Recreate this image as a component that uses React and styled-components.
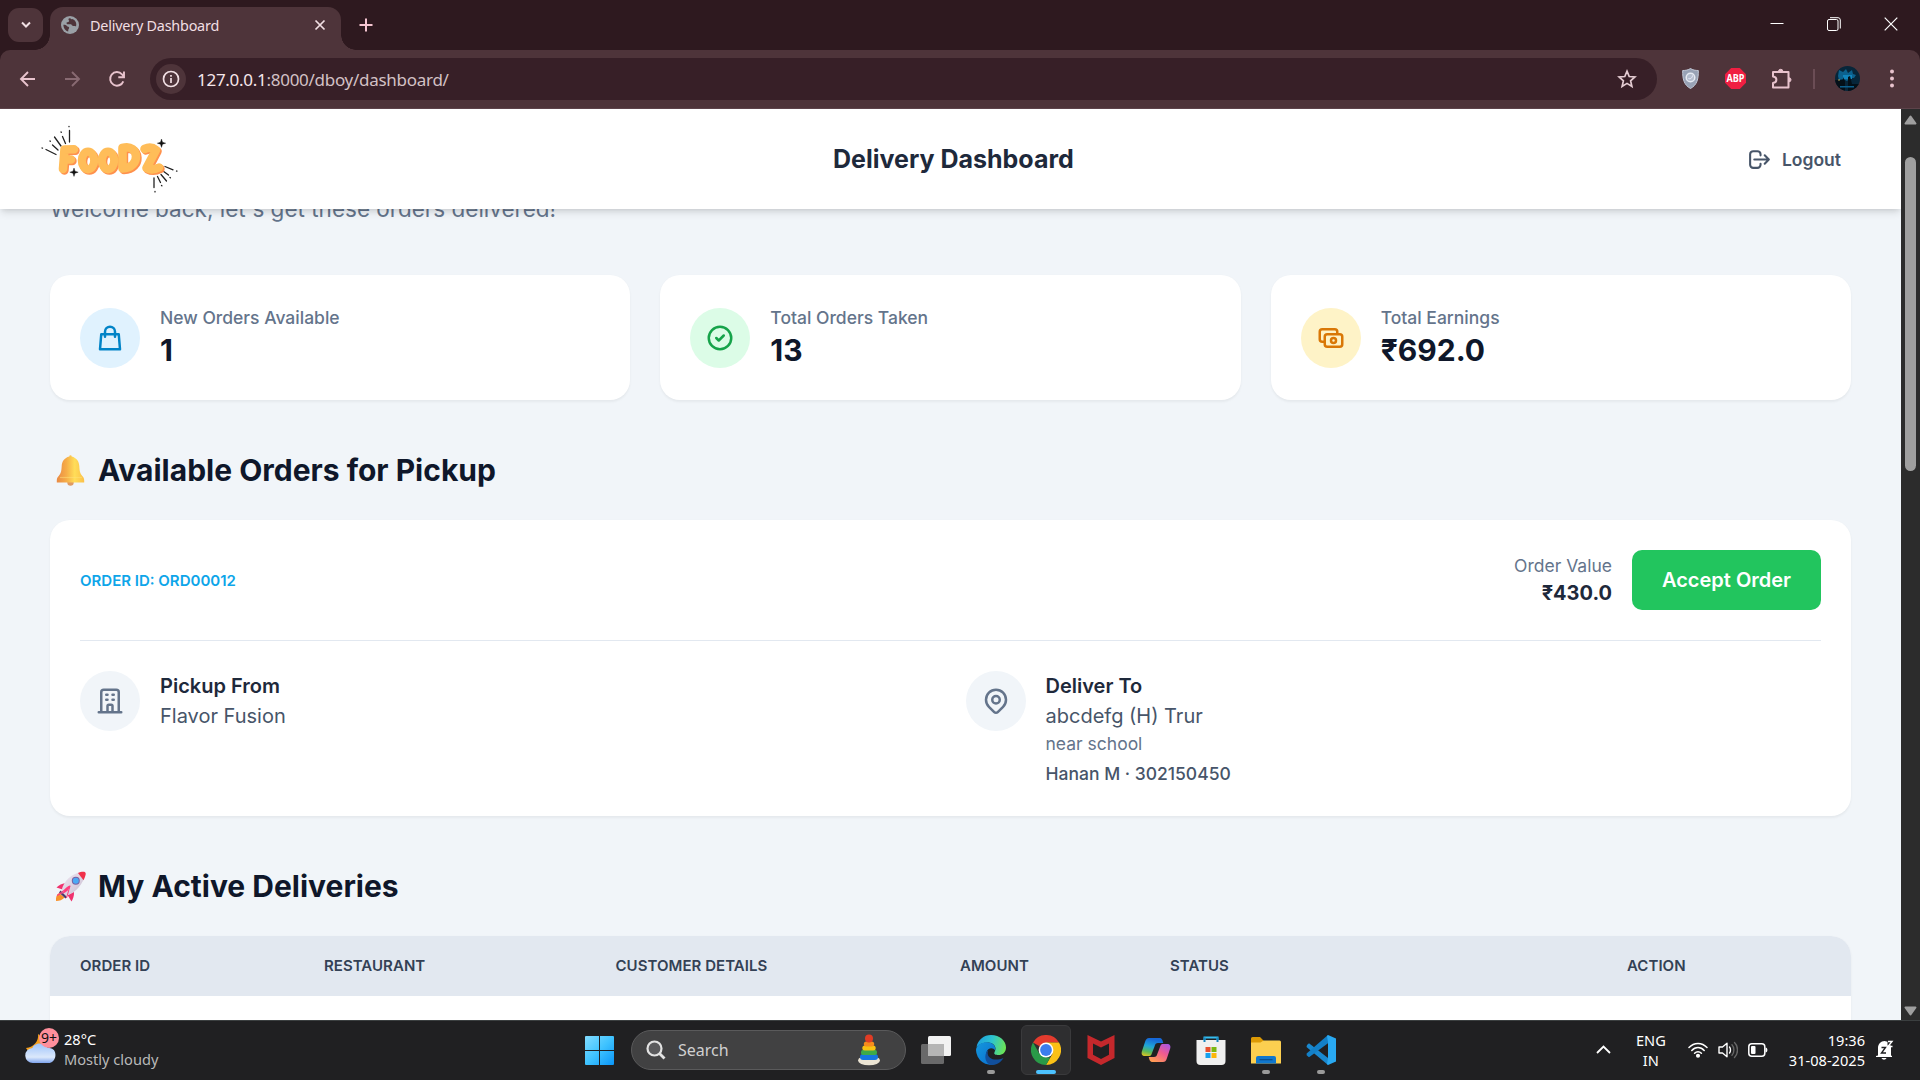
import React from "react";
import styled, { createGlobalStyle } from "styled-components";

const Global = createGlobalStyle`
  * { box-sizing: border-box; }
  html, body { margin: 0; padding: 0; overflow: hidden; }
  button { font: inherit; border: 0; }
  svg { display: block; flex: none; }
`;

const SYS = `"Noto Sans", "Open Sans", sans-serif`;
const UI = `Inter, "Liberation Sans", sans-serif`;

const Screen = styled.div`
  width: 1920px;
  height: 1080px;
  display: flex;
  flex-direction: column;
  overflow: hidden;
  background: #2e191f;
  font-family: ${SYS};
`;

/* ---------- browser frame ---------- */
const TabStrip = styled.div`
  height: 50px;
  flex: none;
  display: flex;
  align-items: flex-start;
  padding: 8px 0 0 8px;
  background: #2e191f;
`;
const TabSearch = styled.button`
  width: 35px;
  height: 34px;
  border-radius: 11px;
  background: #4e343a;
  display: grid;
  place-items: center;
  padding: 0;
`;
const Tab = styled.div`
  position: relative;
  width: 291px;
  height: 43px;
  margin: -1px 0 0 7px;
  padding: 0 15px 7px 11px;
  border-radius: 13px 13px 0 0;
  background: #4e343a;
  display: flex;
  align-items: center;
  &::before, &::after {
    content: "";
    position: absolute;
    bottom: 0;
    width: 15px;
    height: 15px;
  }
  &::before { left: -15px; background: radial-gradient(circle at 0 0, transparent 14.5px, #4e343a 15px); }
  &::after { right: -15px; background: radial-gradient(circle at 100% 0, transparent 14.5px, #4e343a 15px); }
`;
const TabTitle = styled.span`
  flex: 1;
  margin-left: 11px;
  padding-top: 1px;
  font-size: 14.4px;
  line-height: 20px;
  letter-spacing: -0.22px;
  color: #f1dfe3;
`;
const NewTab = styled.span`
  margin: 10px 0 0 18px;
`;
const WindowButtons = styled.div`
  margin-left: auto;
  display: flex;
  gap: 43px;
  padding: 9px 22px 0 0;
`;
const Toolbar = styled.div`
  height: 59px;
  flex: none;
  display: flex;
  align-items: center;
  padding: 0 20px 1px 17px;
  background: #4e343a;
  border-bottom: 1px solid #5d434a;
  border-radius: 10px 10px 0 0;
`;
const NavIcons = styled.div`
  display: flex;
  gap: 25px;
  width: 133px;
`;
const Omnibox = styled.div`
  width: 1507px;
  height: 42px;
  border-radius: 21px;
  background: #371f27;
  display: flex;
  align-items: center;
  padding: 0 20px 0 6px;
`;
const InfoBadge = styled.span`
  width: 30px;
  height: 30px;
  border-radius: 50%;
  background: #4e343a;
  display: grid;
  place-items: center;
`;
const Url = styled.span`
  flex: 1;
  margin-left: 11px;
  padding-top: 2px;
  font-size: 17px;
  letter-spacing: -0.28px;
  color: #d3c1c5;
  b { font-weight: 400; color: #f6e6ea; }
`;
const Extensions = styled.div`
  flex: 1;
  display: flex;
  align-items: center;
  margin-left: 25px;
`;
const Slot = styled.span`
  margin-left: ${(p) => p.$gap}px;
`;
const Divider = styled.span`
  width: 2px;
  height: 20px;
  margin-left: 20px;
  background: #6b4d55;
`;

/* ---------- web page ---------- */
const Viewport = styled.div`
  height: 911px;
  flex: none;
  display: flex;
  background: #f1f5f9;
`;
const Page = styled.div`
  width: 1901px;
  height: 911px;
  overflow: hidden;
  display: flex;
  flex-direction: column;
  font-family: ${UI};
  background: #f1f5f9;
`;
const Header = styled.header`
  position: relative;
  z-index: 2;
  height: 100px;
  flex: none;
  display: grid;
  grid-template-columns: 793px 321px 1fr;
  align-items: center;
  padding: 0 60px 0 40px;
  background: #fff;
  box-shadow: 0 5px 7.5px -1px rgba(0, 0, 0, 0.1), 0 2.5px 5px -2px rgba(0, 0, 0, 0.1);
`;
const HeaderTitle = styled.h1`
  margin: 1px 0 0;
  font-size: 25px;
  font-weight: 700;
  line-height: 35px;
  color: #1e293b;
  white-space: nowrap;
`;
const Logout = styled.a`
  justify-self: end;
  display: flex;
  align-items: center;
  gap: 10px;
  font-size: 17.5px;
  font-weight: 600;
  color: #475569;
`;
const Main = styled.main`
  padding: 0 50px;
  margin-top: -18px;
`;
const Welcome = styled.p`
  margin: 0 0 49px;
  font-size: 22.5px;
  line-height: 35px;
  color: #64748b;
`;
const Stats = styled.section`
  display: grid;
  grid-template-columns: repeat(3, 1fr);
  gap: 30px;
  margin-bottom: 50px;
`;
const Card = styled.div`
  background: #fff;
  border-radius: 20px;
  padding: 30px;
  box-shadow: 0 1.25px 2.5px rgba(0, 0, 0, 0.05);
`;
const StatCard = styled(Card)`
  display: flex;
  align-items: center;
  gap: 20px;
`;
const Circle = styled.span`
  width: 60px;
  height: 60px;
  flex: none;
  border-radius: 50%;
  display: grid;
  place-items: center;
  background: ${(p) => p.$bg};
  color: ${(p) => p.$fg};
`;
const Text = styled.div`
  font-size: ${(p) => p.$size || 20}px;
  line-height: ${(p) => p.$line || 30}px;
  font-weight: ${(p) => p.$weight || 400};
  color: ${(p) => p.$color};
  margin-top: ${(p) => p.$top || 0}px;
`;
const SectionTitle = styled.h2`
  margin: 0 0 30px;
  display: flex;
  align-items: center;
  font-size: 30px;
  line-height: 40px;
  font-weight: 700;
  color: #0f172a;
  svg { margin-right: 8px; }
`;
const OrderCard = styled(Card)`
  margin-bottom: 50px;
`;
const OrderHead = styled.div`
  display: flex;
  align-items: center;
  gap: 20px;
  padding-bottom: 30px;
  border-bottom: 1px solid #e2e8f0;
  margin-bottom: 30px;
`;
const OrderId = styled.span`
  margin-right: auto;
  font-size: 15px;
  font-weight: 600;
  color: #0ea5e9;
`;
const OrderValue = styled.div`
  text-align: right;
`;
const Accept = styled.button`
  height: 60px;
  width: 189px;
  padding: 0;
  border-radius: 10px;
  background: #22c55e;
  color: #fff;
  font-size: 20px;
  font-weight: 600;
`;
const Stops = styled.div`
  display: grid;
  grid-template-columns: 1fr 1fr;
  gap: 30px;
`;
const Stop = styled.div`
  display: flex;
  gap: 20px;
`;
const Table = styled.div`
  background: #fff;
  height: 300px;
  border-radius: 20px 20px 0 0;
  overflow: hidden;
  box-shadow: 0 1.25px 2.5px rgba(0, 0, 0, 0.05);
`;
const TableHead = styled.div`
  display: grid;
  grid-template-columns: 244px 291.5px 344.5px 210px 457px 1fr;
  padding: 20px 0 20px 30px;
  background: #e2e8f0;
  font-size: 15px;
  line-height: 20px;
  font-weight: 600;
  letter-spacing: 0.04px;
  color: #334155;
`;
const Scrollbar = styled.div`
  width: 19px;
  display: flex;
  flex-direction: column;
  align-items: center;
  background: #2c2c2c;
  padding: 6px 0 4px;
`;
const Thumb = styled.div`
  width: 11px;
  height: 314px;
  margin: 32px 0 auto;
  border-radius: 6px;
  background: #9f9f9f;
`;

/* ---------- desktop taskbar ---------- */
const Taskbar = styled.footer`
  height: 60px;
  flex: none;
  display: grid;
  grid-template-columns: 585px 1fr auto;
  background: #202022;
  border-top: 1px solid #3b3f40;
  color: #fff;
`;
const Weather = styled.div`
  display: flex;
  gap: 3px;
  padding: 6px 0 0 25px;
`;
const WeatherText = styled.div`
  padding-top: 2px;
`;
const SysLine = styled.div`
  font-size: 14.6px;
  line-height: 20px;
  color: ${(p) => p.$color || "#fff"};
  text-align: ${(p) => p.$align || "left"};
  white-space: nowrap;
`;
const Apps = styled.div`
  display: flex;
  align-items: center;
  padding-bottom: 1px;
`;
const SearchBox = styled.div`
  width: 275px;
  height: 40px;
  margin: 0 5px 0 17px;
  padding: 0 25px 0 14px;
  border-radius: 20px;
  border: 1px solid #5a5a5b;
  background: #414142;
  display: flex;
  align-items: center;
  gap: 12px;
  font-size: 16px;
  color: #d0d0d0;
  svg:last-child { margin-left: auto; }
`;
const TaskApp = styled.div`
  width: 50px;
  height: 50px;
  margin-right: 5px;
  border-radius: 6px;
  display: flex;
  flex-direction: column;
  align-items: center;
  padding-top: 9px;
  border: 1px solid ${(p) => (p.$active ? "#3a3a3c" : "transparent")};
  background: ${(p) => (p.$active ? "#2e2e30" : "transparent")};
  &::after {
    content: "";
    width: ${(p) => (p.$active ? 20 : 8)}px;
    height: 4px;
    margin-top: 5px;
    border-radius: 2px;
    background: ${(p) => (p.$active ? "#4cc2ff" : p.$open ? "#9a9a9a" : "transparent")};
  }
`;
const Tray = styled.div`
  display: flex;
  align-items: center;
  padding: 0 26px 2px 0;
`;
const TrayItem = styled.div`
  margin-left: ${(p) => p.$gap}px;
`;

/* ---------- drawings ---------- */
const Stroke = ({ size = 30, d, w = 2 }) => (
  <svg width={size} height={size} viewBox="0 0 24 24" fill="none" stroke="currentColor" strokeWidth={w} strokeLinecap="round" strokeLinejoin="round">
    {[].concat(d).map((x) => <path key={x} d={x} />)}
  </svg>
);
const D = {
  bag: "M16 11V7a4 4 0 00-8 0v4M5 9h14l1 12H4L5 9z",
  check: "M9 12l2 2 4-4m6 2a9 9 0 11-18 0 9 9 0 0118 0z",
  cash: "M17 9V7a2 2 0 00-2-2H5a2 2 0 00-2 2v6a2 2 0 002 2h2m2 4h10a2 2 0 002-2v-6a2 2 0 00-2-2H9a2 2 0 00-2 2v6a2 2 0 002 2zm7-5a2 2 0 11-4 0 2 2 0 014 0z",
  building: "M19 21V5a2 2 0 00-2-2H7a2 2 0 00-2 2v16m14 0h2m-2 0h-5m-9 0H3m2 0h5M9 7h1m-1 4h1m4-4h1m-1 4h1m-5 10v-5a1 1 0 011-1h2a1 1 0 011 1v5m-4 0h4",
  pin: ["M17.657 16.657L13.414 20.9a1.998 1.998 0 01-2.827 0l-4.244-4.243a8 8 0 1111.314 0z", "M15 11a3 3 0 11-6 0 3 3 0 016 0z"],
  logout: "M17 16l4-4m0 0l-4-4m4 4H7m6 4v1a3 3 0 01-3 3H6a3 3 0 01-3-3V7a3 3 0 013-3h4a3 3 0 013 3v1",
};

const Line = ({ w, h, d, color = "#e8c3cd", sw = 2 }) => (
  <svg width={w} height={h} viewBox={`0 0 ${w} ${h}`} fill="none" stroke={color} strokeWidth={sw}>
    <path d={d} />
  </svg>
);

const Globe = () => (
  <svg width="18" height="18" viewBox="0 0 18 18">
    <circle cx="9" cy="9" r="9" fill="#9aa0a6" />
    <path d="M8 2.2c-1 1-.4 2 .2 2.6-.1 1.300-1.500 1.500-2.600 1.600-.4 1.100.3 1.800 1.600 1.900h3c.7.9 1 1.700 2.300 1.700.9-.1 1.300.2 2.600.2a6.600 6.600 0 0 0-3.500-7.300c-.7.7-1.600.6-1.900-.3zM2.400 8.800c1.600.1 2.900.3 3.800 1.500.8.7 1.900.4 2 1.500-.2 1.100-1 1.400-.9 2.400-.1.7-.2.900 0 1.300-2.800-.6-4.900-3.300-4.900-6.700z" fill="#4e343a" />
  </svg>
);

const Logo = () => (
  <svg width="140" height="72" viewBox="0 -2.500 140 72">
    <g stroke="#222" strokeWidth="1.300" strokeLinecap="round" fill="none">
      <path d="M6 24l10 5M12.500 19.500l5.500 5M14.500 11.500l6.500 9M22.500 11l3 7M29.500 5v11.500M125 41l8 3.300M123 45.500l5.500 4M121 49l5.500 6.500M117.500 51l3 6M114 52.500v9.500" />
      <path d="M2 22.500l.5.200M10 15.500l.3.300M21 6.500l.3.300M29 .800v.4M136.500 45.500l.4.200M130 52l.4.300M121.500 60l.4.300M115 66v.4" />
    </g>
    {[["#ff914d", 1.400, 1.400], ["#ffbd59", 0, 0]].map(([c, x, y]) => (
      <g key={c} transform={`translate(${x} ${y})`} stroke={c} fill="none" strokeWidth="8.200" strokeLinecap="round" strokeLinejoin="round">
        <path d="M23 43.500L24.500 24L34 23.800M24.500 34h6.500" strokeWidth="8.600" />
        <ellipse cx="48" cy="35" rx="6.200" ry="8.800" />
        <ellipse cx="68" cy="35" rx="6.200" ry="8.800" />
        <path d="M82.500 43V22.500C99.500 17.500 101.500 42.500 82.500 43z" strokeWidth="8.600" />
        <path d="M104.500 23.500Q111 20.500 116 24.500L106.500 42.500Q112 45.500 119 42" strokeWidth="8.600" />
      </g>
    ))}
    <path d="M121.500 13.500l1 3.200 3.200 1-3.200 1-1 3.200-1-3.200-3.200-1 3.200-1zM34 42.500l1 3.200 3.200 1-3.200 1-1 3.200-1-3.200-3.200-1 3.200-1z" fill="#111" stroke="#111" strokeWidth=".4" />
  </svg>
);

const Bell = () => (
  <svg width="40" height="40" viewBox="0 0 40 40">
    <defs>
      <linearGradient id="bell" x1="0" x2="1"><stop offset="0" stopColor="#e98a45" /><stop offset=".35" stopColor="#f6ad48" /><stop offset=".65" stopColor="#ffdd58" /><stop offset="1" stopColor="#fbc04a" /></linearGradient>
    </defs>
    <circle cx="20.500" cy="32.500" r="3.200" fill="#e09a62" />
    <path d="M19.300 6.500a1.200 1.200 0 0 1 2.400 0c5 1.300 7.300 5 7.600 9.500.3 6 1 7.500 3 10 1.300 1.500 1.900 2.500 1.900 4.500v2h-27.400v-2c0-2 .6-3 1.900-4.500 2-2.500 2.700-4 3-10 .3-4.500 2.600-8.200 7.600-9.500z" fill="url(#bell)" />
    <path d="M10 27.500h22" stroke="#ffe27a" strokeWidth="1.200" opacity=".5" />
  </svg>
);
const Rocket = () => (
  <svg width="40" height="40" viewBox="0 0 40 40">
    <defs>
      <linearGradient id="hull" x1="0" y1="0" x2="1" y2="1"><stop offset="0" stopColor="#efe6f1" /><stop offset=".6" stopColor="#d9cfdf" /><stop offset="1" stopColor="#b8a5bd" /></linearGradient>
    </defs>
    <path d="M9 27c-2.500 1.500-3.300 4.500-3 8 3.500 0 6.500-1 8.500-3.500z" fill="#f8922c" />
    <path d="M17 17c-5 .3-8.500 2.300-10.500 4.500l6 2zM24 26c.3 4-1 7-2.500 9.500l-4-6.500z" fill="#f0326e" />
    <path d="M11.500 24.500C14 15 21 7.500 32 6c2-.3 3.700.2 3.500 2C33 18 26 26.500 16 30z" fill="url(#hull)" />
    <path d="M28 7c3-1.200 8-2.300 7.700 1-.4 2.500-1.200 4.300-2.200 6.300z" fill="#f0304a" />
    <path d="M10.500 24.500l6.500 6.500-1.500 1.500-6.500-6z" fill="#4a3b6b" />
    <path d="M20 20L7 29.500l5-2.500M20 20l-3.500 12" stroke="#ff3d7d" strokeWidth="1" fill="none" />
    <path d="M20.500 19.500c-3 .5-6.500 3.500-8.500 8.500 4.500-1.500 7.500-4.500 8.500-8.500z" fill="#ff3d7d" />
    <circle cx="25.800" cy="14.800" r="4" fill="#7a5fa0" /><circle cx="25.800" cy="14.800" r="3" fill="#4ba9f5" />
  </svg>
);

const WeatherIcon = () => (
  <svg width="36" height="38" viewBox="0 0 36 38">
    <defs><linearGradient id="cloud" x1="0" y1="0" x2="0" y2="1"><stop offset="0" stopColor="#9fc4fb" /><stop offset=".7" stopColor="#dbe8fb" /><stop offset="1" stopColor="#7ea4ee" /></linearGradient></defs>
    <path d="M13 7c1 7-4 13-12 14 2 4 8 6 13 4s8-12-1-18z" fill="#f7a01d" />
    <path d="M8 36a7.500 7.500 0 0 1-.5-15C9 15.500 20 14.500 23 21c10-1.500 10 15 0 15z" fill="url(#cloud)" />
    <circle cx="24" cy="11" r="10" fill="#ff8f9c" />
    <text x="24" y="16" textAnchor="middle" fontFamily="Noto Sans, sans-serif" fontSize="14" fill="#111">9+</text>
  </svg>
);
const Windows = () => (
  <svg width="29" height="29" viewBox="0 0 29 29">
    <defs><linearGradient id="win" x1="0" y1="0" x2="1" y2="1"><stop offset="0" stopColor="#83dcff" /><stop offset=".5" stopColor="#3fc3ff" /><stop offset="1" stopColor="#0a95f8" /></linearGradient></defs>
    <path d="M0 1a1 1 0 0 1 1-1h13v14H0zM15 0h13a1 1 0 0 1 1 1v13H15zM0 15h14v14H1a1 1 0 0 1-1-1zM15 15h14v13a1 1 0 0 1-1 1H15z" fill="url(#win)" />
  </svg>
);
const Toy = () => (
  <svg width="22" height="32" viewBox="0 0 22 32">
    <ellipse cx="11" cy="26.500" rx="11" ry="4.800" fill="#ece5d4" />
    <rect x="2" y="20" width="18" height="6" rx="3" fill="#1677e0" />
    <rect x="3" y="15.700" width="16" height="5.300" rx="2.600" fill="#3dab49" />
    <rect x="4.300" y="11.600" width="13.400" height="5" rx="2.500" fill="#f7c212" />
    <rect x="5.800" y="7.500" width="10.400" height="5" rx="2.500" fill="#f78c1c" />
    <circle cx="11" cy="4.500" r="4" fill="#e03c25" />
  </svg>
);
const TaskView = () => (
  <svg width="30" height="30" viewBox="0 0 30 30">
    <rect x="7" y="1" width="23" height="20" rx="1.500" fill="#f2f2f2" />
    <rect x="0" y="9" width="23" height="20" rx="1.500" fill="#777" opacity=".85" />
    <path d="M7 9h16v12H7z" fill="#b5b5b5" />
  </svg>
);
const Edge = () => (
  <svg width="30" height="30" viewBox="0 0 30 30">
    <defs>
      <linearGradient id="e1" x1="0" y1=".3" x2="1" y2=".5"><stop offset="0" stopColor="#1c9fe0" /><stop offset=".5" stopColor="#2dc4cf" /><stop offset="1" stopColor="#6be455" /></linearGradient>
      <linearGradient id="e2" x1="0" y1="0" x2="1" y2="1"><stop offset="0" stopColor="#1497dc" /><stop offset="1" stopColor="#0a6ed0" /></linearGradient>
    </defs>
    <path d="M.5 12C2 4.500 8 0 15 0c9 0 15 6 15 12.500 0 5-3.500 7.500-7.500 7.500-3 0-5-1-4-2.800 3-5-1-9.700-6.500-9.700C7 7.500 3 9 .5 12z" fill="url(#e1)" />
    <path d="M0 15C.5 9.500 6 7.300 11 7.300c5.500 0 9.500 4 8 8-1.500-3.300-7.500-3-8.500 2-.8 5 3 10.500 9 11.700A15 15 0 0 1 0 15z" fill="url(#e2)" />
    <path d="M12.500 14.500c-3.500 7 4 13 15 8.500-3 5-8 7.500-13 6.900C8 27.500 8 18 12.500 14.500z" fill="#114f9c" />
  </svg>
);
const ChromeIcon = () => (
  <svg width="30" height="30" viewBox="0 0 30 30">
    <path d="M15 15L2 7.500A15 15 0 0 1 28 7.500H15z" fill="#e33b2e" />
    <path d="M15 7.500h13A15 15 0 0 1 15 30l6.500-11.200z" fill="#fbc116" />
    <path d="M2 7.500l6.500 11.300L15 22.500h4.300L15 30A15 15 0 0 1 2 7.500z" fill="#2a9a48" />
    <circle cx="15" cy="15" r="7.400" fill="#fff" /><circle cx="15" cy="15" r="5.900" fill="#3b7ded" />
  </svg>
);
const McAfee = () => (
  <svg width="28" height="30" viewBox="0 0 28 30">
    <path d="M.5 0L14 6.500 27.500 0v23L14 30 .5 23z" fill="#c5282c" />
    <path d="M6 8.500l8 4 8-4v11.300l-8 4.200-8-4.200z" fill="#202022" />
  </svg>
);
const Copilot = () => (
  <svg width="30" height="30" viewBox="0 0 30 30">
    <defs>
      <linearGradient id="c1" x1=".3" y1="0" x2="0" y2="1"><stop offset="0" stopColor="#1668d8" /><stop offset=".4" stopColor="#1fa5d8" /><stop offset=".7" stopColor="#59b85a" /><stop offset="1" stopColor="#f5c518" /></linearGradient>
      <linearGradient id="c2" x1="1" y1="0" x2=".3" y2="1"><stop offset="0" stopColor="#a055f0" /><stop offset=".5" stopColor="#ef5a90" /><stop offset="1" stopColor="#ff9a55" /></linearGradient>
    </defs>
    <path d="M8 3h10c3 0 3.500 2 4.300 5H17c-2 0-2.800 1-3.300 3L11 18c-.7 2.500-1.500 3-3.500 3H4c-3 0-4-2-3-5l3-9c1-3 2-4 4-4z" fill="url(#c1)" />
    <path d="M22 27H12c-3 0-3.500-2-4.300-5H13c2 0 2.800-1 3.300-3L19 12c.7-2.500 1.500-3 3.500-3H26c3 0 4 2 3 5l-3 9c-1 3-2 4-4 4z" fill="url(#c2)" />
  </svg>
);
const Store = () => (
  <svg width="30" height="30" viewBox="0 0 30 30">
    <path d="M8.500 7V2.500h13V7" fill="none" stroke="#35bdf0" strokeWidth="2" />
    <path d="M.5 5h29v21a4 4 0 0 1-4 4h-21a4 4 0 0 1-4-4z" fill="#f0f0f0" />
    <path d="M8.500 2.500V7M21.500 2.500V7" stroke="#1583bd" strokeWidth="2" />
    <path d="M9.500 12h5v5h-5z" fill="#e8502f" /><path d="M15.500 12h5v5h-5z" fill="#7cb811" /><path d="M9.500 18h5v5h-5z" fill="#16a2ee" /><path d="M15.500 18h5v5h-5z" fill="#fdb70b" />
  </svg>
);
const Folder = () => (
  <svg width="30" height="30" viewBox="0 0 30 30">
    <path d="M0 3.500A1.500 1.500 0 0 1 1.500 2H9l3.500 3.500V9H0z" fill="#dc9a05" />
    <path d="M0 7.500h9.500L12.500 5.500h16A1.500 1.500 0 0 1 30 7v21.500H0z" fill="#fccf50" />
    <path d="M5 28.500V23a2 2 0 0 1 2-2h16a2 2 0 0 1 2 2v5.500z" fill="#1077cd" /><path d="M8.500 24.700h13" stroke="#0a4d8c" strokeWidth="1.200" />
  </svg>
);
const VsCode = () => (
  <svg width="30" height="30" viewBox="0 0 30 30">
    <path d="M1 10l2-1.800 20 15.600L22 30 .5 12z" fill="#1a88cf" />
    <path d="M.6 18.500L22 0l1 7.500L3 22.300.6 20.300z" fill="#1380c8" />
    <path d="M22 0l8 3.500v23L22 30l-1-1 1-6V7l-1-6z" fill="#29a9f2" />
  </svg>
);
const Shield = () => (
  <svg width="17" height="21" viewBox="0 0 17 21">
    <path d="M8.500.5c2 1.500 5 2 7.800 2C16.500 11 15 17 8.500 20.500 2 17 .5 11 .7 2.500c2.800 0 5.800-.5 7.800-2z" fill="#98a2b5" stroke="#c3cad8" />
    <circle cx="8.500" cy="9.500" r="4.300" fill="#b4bdcd" stroke="#e6eaf2" strokeWidth="1.500" /><path d="M6.500 10.500c2 1 4-1 4-3" stroke="#eef" fill="none" />
  </svg>
);
const Abp = () => (
  <svg width="21" height="21" viewBox="0 0 21 21">
    <path d="M6.200 0h8.600L21 6.200v8.600L14.800 21H6.200L0 14.800V6.200z" fill="#f01f42" />
    <text x="10.500" y="14" textAnchor="middle" fontFamily="Open Sans, sans-serif" fontWeight="700" fontSize="9.800" textLength="18" lengthAdjust="spacingAndGlyphs" fill="#fff">ABP</text>
  </svg>
);
const Avatar = () => (
  <svg width="25" height="25" viewBox="0 0 25 25">
    <defs><clipPath id="av"><circle cx="12.500" cy="12.500" r="12.500" /></clipPath></defs>
    <g clipPath="url(#av)">
      <path d="M0 0h25v25H0z" fill="#07263a" />
      <path d="M4 4l4 2 3-3 2 4 4-3 1 4 3 1-2 3h-4l-3 3-4-2-4 1-1-4z" fill="#0c618e" />
      <path d="M8 9h9v4H8z" fill="#1185bd" /><path d="M0 14h8v-3l2 4v10H0zM13 11l2-1 2 8h8v7H13z" fill="#041018" />
      <path d="M5 20h14v1.500H5z" fill="#0c5f8c" /><circle cx="4" cy="14" r=".8" fill="#c9b35a" />
    </g>
  </svg>
);
const Wifi = () => (
  <svg width="20" height="16" viewBox="0 0 20 16" fill="none" stroke="#fff" strokeWidth="1.500" strokeLinecap="round">
    <path d="M1 5.500c5-5.500 13-5.500 18 0M3.800 8.500c3.500-4 8.900-4 12.400 0M6.600 11.300c2-2.200 4.800-2.200 6.800 0" /><circle cx="10" cy="13.700" r="1.300" fill="#fff" />
  </svg>
);
const Volume = () => (
  <svg width="20" height="18" viewBox="0 0 20 18" fill="none" strokeWidth="1.400" strokeLinecap="round" strokeLinejoin="round">
    <path d="M1 6h3.500L9 2.200v13.600L4.500 12H1z" stroke="#fff" /><path d="M11.500 6c1.300 1.500 1.300 4.500 0 6" stroke="#fff" /><path d="M14 3.800c2.500 2.500 2.500 7.900 0 10.400M16.500 1.500c4 4 4 11 0 15" stroke="#666" />
  </svg>
);
const Battery = () => (
  <svg width="20" height="14" viewBox="0 0 20 14"><rect x=".8" y=".8" width="16" height="12.400" rx="3" fill="none" stroke="#fff" strokeWidth="1.500" /><rect x="3" y="3" width="4.500" height="8" rx="1" fill="#fff" /><path d="M17.500 4.500c2.500 0 2.500 5 0 5z" fill="#fff" /></svg>
);
const Dnd = () => (
  <svg width="18" height="20" viewBox="0 0 18 20">
    <path d="M2 15.500V8c0-4 3-7 6.500-7l3 .8v3.700h3.500v10l1 .5v1H0v-1z" fill="#fff" /><path d="M5.500 18h5c-1 2.300-4 2.300-5 0z" fill="#fff" />
    <path d="M5.500 7.500h4l-4 5.500h4.500" stroke="#202022" strokeWidth="1.400" fill="none" /><path d="M12 1.500h4l-4 5h4.500" stroke="#fff" strokeWidth="1.400" fill="none" />
  </svg>
);

const stats = [
  { label: "New Orders Available", value: "1", icon: D.bag, bg: "#e0f2fe", fg: "#0284c7" },
  { label: "Total Orders Taken", value: "13", icon: D.check, bg: "#dcfce7", fg: "#16a34a" },
  { label: "Total Earnings", value: "₹692.0", icon: D.cash, bg: "#fef3c7", fg: "#d97706" },
];
const columns = ["ORDER ID", "RESTAURANT", "CUSTOMER DETAILS", "AMOUNT", "STATUS", "ACTION"];

export default function App() {
  return (
    <Screen>
      <Global />
      <TabStrip>
        <TabSearch><Line w={12} h={12} d="M2 3.500l4 4 4-4" color="#f1dfe3" /></TabSearch>
        <Tab>
          <Globe />
          <TabTitle>Delivery Dashboard</TabTitle>
          <Line w={12} h={12} d="M1.500 1.500l9 9M10.500 1.500l-9 9" color="#f1dfe3" sw={1.700} />
        </Tab>
        <NewTab><Line w={14} h={14} d="M7 .5v13M.5 7h13" color="#f5c5d1" /></NewTab>
        <WindowButtons>
          <Line w={14} h={14} d="M.5 6.500h13" color="#fff" sw={1} />
          <svg width="14" height="14" viewBox="0 0 14 14" fill="none" stroke="#fff"><rect x=".5" y="2.500" width="10.500" height="11" rx="1.500" /><path d="M3 .7h8a2.300 2.300 0 0 1 2.300 2.300v8.500" /></svg>
          <Line w={14} h={14} d="M.7 .7l12.600 12.600M13.300 .7l-12.600 12.600" color="#fff" sw={1.200} />
        </WindowButtons>
      </TabStrip>
      <Toolbar>
        <NavIcons>
          <Line w={20} h={20} d="M18 10H4M11 3l-7 7 7 7" sw={1.900} />
          <Line w={20} h={20} d="M3 10h14M10 3l7 7-7 7" color="#886a72" sw={1.900} />
          <Line w={20} h={20} d="M16.300 12.300A6.800 6.800 0 1 1 15 5.300L17 7.500M17 2.500V8.300H11.300" sw={1.900} />
        </NavIcons>
        <Omnibox>
          <InfoBadge>
            <svg width="18" height="18" viewBox="0 0 18 18" fill="none" stroke="#f1dfe3" strokeWidth="1.700"><circle cx="9" cy="9" r="7.500" /><path d="M9 8v5M9 5v1.800" /></svg>
          </InfoBadge>
          <Url><b>127.0.0.1</b>:8000/dboy/dashboard/</Url>
          <svg width="20" height="20" viewBox="0 0 20 20" fill="none" stroke="#e4ccd2" strokeWidth="1.700"><path d="M10 2.200l2.200 5.300 5.700.5-4.300 3.800 1.300 5.600L10 14.400l-4.900 3 1.300-5.600L2.100 8l5.700-.5z" /></svg>
        </Omnibox>
        <Extensions>
          <Slot $gap={0}><Shield /></Slot>
          <Slot $gap={26}><Abp /></Slot>
          <Slot $gap={25}>
            <svg width="22" height="22" viewBox="0 0 22 22" fill="none" stroke="#e8c3cd" strokeWidth="2" strokeLinejoin="round"><path d="M2 4h15.500v15.500H2v-4.500c4.500-.5 4.500-6 0-6.500z" /><path d="M7.500 3.500a2.200 2.200 0 0 1 4.400 0zM18 9.800a2 2 0 0 1 0 4z" fill="#e8c3cd" strokeWidth="1" /></svg>
          </Slot>
          <Divider />
          <Slot $gap={20}><Avatar /></Slot>
          <Slot $gap={30}><svg width="4" height="19" viewBox="0 0 4 19" fill="#e8c3cd"><circle cx="2" cy="2.500" r="2" /><circle cx="2" cy="9.500" r="2" /><circle cx="2" cy="16.500" r="2" /></svg></Slot>
        </Extensions>
      </Toolbar>

      <Viewport>
        <Page>
          <Header>
            <Logo />
            <HeaderTitle>Delivery Dashboard</HeaderTitle>
            <Logout><Stroke size={25} d={D.logout} />Logout</Logout>
          </Header>
          <Main>
            <Welcome>Welcome back, let's get these orders delivered!</Welcome>
            <Stats>
              {stats.map((s) => (
                <StatCard key={s.label}>
                  <Circle $bg={s.bg} $fg={s.fg}><Stroke d={s.icon} /></Circle>
                  <div>
                    <Text $size={17.5} $line={25} $weight={500} $color="#64748b">{s.label}</Text>
                    <Text $size={30} $line={40} $weight={700} $color="#0f172a">{s.value}</Text>
                  </div>
                </StatCard>
              ))}
            </Stats>
            <SectionTitle><Bell />Available Orders for Pickup</SectionTitle>
            <OrderCard>
              <OrderHead>
                <OrderId>ORDER ID: ORD00012</OrderId>
                <OrderValue>
                  <Text $size={17.5} $line={25} $color="#64748b">Order Value</Text>
                  <Text $weight={700} $color="#1e293b">₹430.0</Text>
                </OrderValue>
                <Accept>Accept Order</Accept>
              </OrderHead>
              <Stops>
                <Stop>
                  <Circle $bg="#f1f5f9" $fg="#64748b"><Stroke d={D.building} /></Circle>
                  <div>
                    <Text $weight={600} $color="#1e293b">Pickup From</Text>
                    <Text $color="#475569">Flavor Fusion</Text>
                  </div>
                </Stop>
                <Stop>
                  <Circle $bg="#f1f5f9" $fg="#64748b"><Stroke d={D.pin} /></Circle>
                  <div>
                    <Text $weight={600} $color="#1e293b">Deliver To</Text>
                    <Text $color="#475569">abcdefg (H) Trur</Text>
                    <Text $size={17.5} $line={25} $color="#64748b">near school</Text>
                    <Text $size={17.5} $line={25} $top={5} $weight={500} $color="#475569">Hanan M · 302150450</Text>
                  </div>
                </Stop>
              </Stops>
            </OrderCard>
            <SectionTitle><Rocket />My Active Deliveries</SectionTitle>
            <Table>
              <TableHead>{columns.map((c) => <span key={c}>{c}</span>)}</TableHead>
            </Table>
          </Main>
        </Page>
        <Scrollbar>
          <svg width="13" height="10" viewBox="0 0 13 10"><path d="M6.500 1.500L11.500 8.500H1.500z" fill="#9f9f9f" stroke="#9f9f9f" strokeWidth="2" strokeLinejoin="round" /></svg>
          <Thumb />
          <svg width="13" height="10" viewBox="0 0 13 10"><path d="M6.500 8.500L11.500 1.500H1.500z" fill="#9f9f9f" stroke="#9f9f9f" strokeWidth="2" strokeLinejoin="round" /></svg>
        </Scrollbar>
      </Viewport>

      <Taskbar>
        <Weather>
          <WeatherIcon />
          <WeatherText>
            <SysLine>28°C</SysLine>
            <SysLine $color="#b9b9b9">Mostly cloudy</SysLine>
          </WeatherText>
        </Weather>
        <Apps>
          <Windows />
          <SearchBox>
            <svg width="20" height="20" viewBox="0 0 20 20" fill="none" stroke="#e2e2e2" strokeWidth="2.200"><circle cx="8.500" cy="8.500" r="7" fill="#5a5a5c" /><path d="M13.500 13.500l5 5" strokeWidth="2.800" /></svg>
            Search
            <Toy />
          </SearchBox>
          <TaskApp><TaskView /></TaskApp>
          <TaskApp $open><Edge /></TaskApp>
          <TaskApp $active><ChromeIcon /></TaskApp>
          <TaskApp><McAfee /></TaskApp>
          <TaskApp><Copilot /></TaskApp>
          <TaskApp><Store /></TaskApp>
          <TaskApp $open><Folder /></TaskApp>
          <TaskApp $open><VsCode /></TaskApp>
        </Apps>
        <Tray>
          <TrayItem $gap={0}><Line w={15} h={9} d="M1 8l6.500-6.500L14 8" color="#fff" sw={1.800} /></TrayItem>
          <TrayItem $gap={25}><SysLine $align="center">ENG</SysLine><SysLine $align="center">IN</SysLine></TrayItem>
          <TrayItem $gap={22}><Wifi /></TrayItem>
          <TrayItem $gap={10}><Volume /></TrayItem>
          <TrayItem $gap={10}><Battery /></TrayItem>
          <TrayItem $gap={21}><SysLine $align="right">19:36</SysLine><SysLine $align="right">31-08-2025</SysLine></TrayItem>
          <TrayItem $gap={11}><Dnd /></TrayItem>
        </Tray>
      </Taskbar>
    </Screen>
  );
}
